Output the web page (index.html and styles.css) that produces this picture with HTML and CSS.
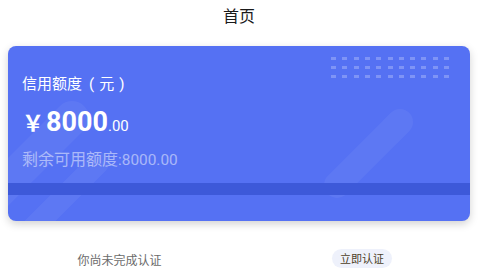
FILE: index.html
```html
<!DOCTYPE html>
<html lang="zh">
<head>
<meta charset="utf-8">
<link rel="stylesheet" href="styles.css">
</head>
<body>
<header class="title">首页</header>
<section class="card">
  <div class="band band-a"></div>
  <div class="band band-b"></div>
  <div class="band band-c"></div>
  <div class="dots">
    <i></i><i></i><i></i><i></i><i></i><i></i><i></i><i></i><i></i><i></i><i></i>
    <i></i><i></i><i></i><i></i><i></i><i></i><i></i><i></i><i></i><i></i><i></i>
    <i></i><i></i><i></i><i></i><i></i><i></i><i></i><i></i><i></i><i></i><i></i>
  </div>
  <div class="label">信用额度<span class="paren open">(</span>元<span class="paren close">)</span></div>
  <div class="amount"><span class="yen">￥</span><span class="int">8000</span><span class="dec">.00</span></div>
  <div class="remain">剩余可用额度<span class="num">:8000.00</span></div>
  <div class="stripe"></div>
</section>
<section class="verify">
  <div class="cell"><span class="hint">你尚未完成认证</span></div>
  <div class="cell"><span class="btn">立即认证</span></div>
</section>
</body>
</html>
```
FILE: styles.css
```css
html, body {
  margin: 0;
  padding: 0;
  background: #ffffff;
  font-family: Roboto, "Noto Sans CJK SC", sans-serif;
}

.title {
  height: 30px;
  line-height: 30px;
  text-align: center;
  font-size: 16px;
  color: #1a1a1a;
  font-family: "Noto Sans CJK SC", sans-serif;
}

.card {
  position: relative;
  overflow: hidden;
  margin: 16px 8px 0 8px;
  height: 175px;
  box-sizing: border-box;
  padding-top: 26px;
  background: #5571f3;
  border-radius: 8px;
  box-shadow: 0 3px 8px rgba(0, 0, 0, 0.18);
  color: #ffffff;
}

.band {
  position: absolute;
  background: rgba(255, 255, 255, 0.05);
  transform: rotate(-45deg);
}
.band-a {
  width: 170px;
  height: 34px;
  border-radius: 17px;
  left: -89px;
  top: 55px;
  transform-origin: 153px 17px;
}
.band-b {
  width: 130px;
  height: 22px;
  border-radius: 11px;
  left: -29px;
  top: 106px;
  transform-origin: 119px 11px;
}
.band-c {
  width: 115px;
  height: 26px;
  border-radius: 13px;
  left: 290px;
  top: 63px;
  transform-origin: 102px 13px;
}

.dots {
  position: absolute;
  top: 11px;
  right: 21px;
  display: grid;
  grid-template-columns: repeat(11, 5px);
  grid-auto-rows: 3px;
  column-gap: 6.3px;
  row-gap: 6px;
}
.dots i {
  display: block;
  background: rgba(255, 255, 255, 0.25);
}

.label {
  position: relative;
  padding-left: 14px;
  font-family: "Noto Sans CJK SC", sans-serif;
  font-size: 15px;
  line-height: 22px;
  height: 22px;
}
.paren {
  font-family: Roboto, sans-serif;
  font-size: 15px;
}
.paren.open {
  margin: 0 5px 0 7px;
}
.paren.close {
  margin-left: 5px;
}

.amount {
  position: relative;
  margin-top: 9px;
  height: 36px;
  padding-left: 14px;
  display: flex;
  align-items: baseline;
  line-height: 36px;
}
.yen {
  font-family: "Noto Sans CJK SC", sans-serif;
  font-size: 22px;
  font-weight: 700;
  margin-right: 2px;
}
.int {
  font-family: Roboto, sans-serif;
  font-size: 27px;
  font-weight: 700;
}
.dec {
  font-family: Roboto, sans-serif;
  font-size: 15px;
}

.remain {
  position: relative;
  margin-top: 10px;
  height: 22px;
  line-height: 22px;
  padding-left: 14px;
  font-size: 16px;
  color: rgba(255, 255, 255, 0.5);
  font-family: Roboto, "Noto Sans CJK SC", sans-serif;
}
.remain .num {
  font-size: 15.4px;
}

.stripe {
  position: relative;
  margin-top: 12px;
  height: 12px;
  background: #3d59d9;
}

.verify {
  display: flex;
  margin-top: 25px;
  height: 24px;
  align-items: center;
}
.cell {
  flex: 1;
  display: flex;
  justify-content: center;
  align-items: center;
}
.hint {
  font-family: "Noto Sans CJK SC", sans-serif;
  font-size: 12px;
  color: #6b6b6b;
  margin-top: 2px;
}
.btn {
  margin-left: 7px;
  height: 19px;
  line-height: 19px;
  padding: 0 8px;
  border-radius: 10px;
  background: #eef1fb;
  color: #4d3f27;
  font-family: "Noto Sans CJK SC", sans-serif;
  font-size: 11px;
}
```
